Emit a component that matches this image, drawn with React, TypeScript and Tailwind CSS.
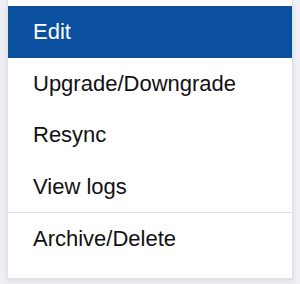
const items = ['Edit', 'Upgrade/Downgrade', 'Resync', 'View logs'];

export default function App() {
  return (
    <div className="h-[284px] w-[300px] overflow-hidden bg-[#eef0f3] px-[7px] font-['Liberation_Sans',Arial,sans-serif]">
      <div className="border border-t-0 border-[#dde0e4] bg-white pt-[6px] pb-[13px] shadow-[0_2px_6px_rgba(0,0,0,0.08)]">
        {items.map((label, i) => (
          <div
            key={label}
            className={`flex h-[51.5px] items-center pl-[25px] text-[22px] ${
              i === 0 ? 'bg-[#0a509e] text-white' : 'text-[#111]'
            }`}
          >
            {label}
          </div>
        ))}
        <div className="h-px bg-[#dcdfe3]" />
        <div className="flex h-[51.5px] items-center pl-[25px] text-[22px] text-[#111]">Archive/Delete</div>
      </div>
    </div>
  );
}
